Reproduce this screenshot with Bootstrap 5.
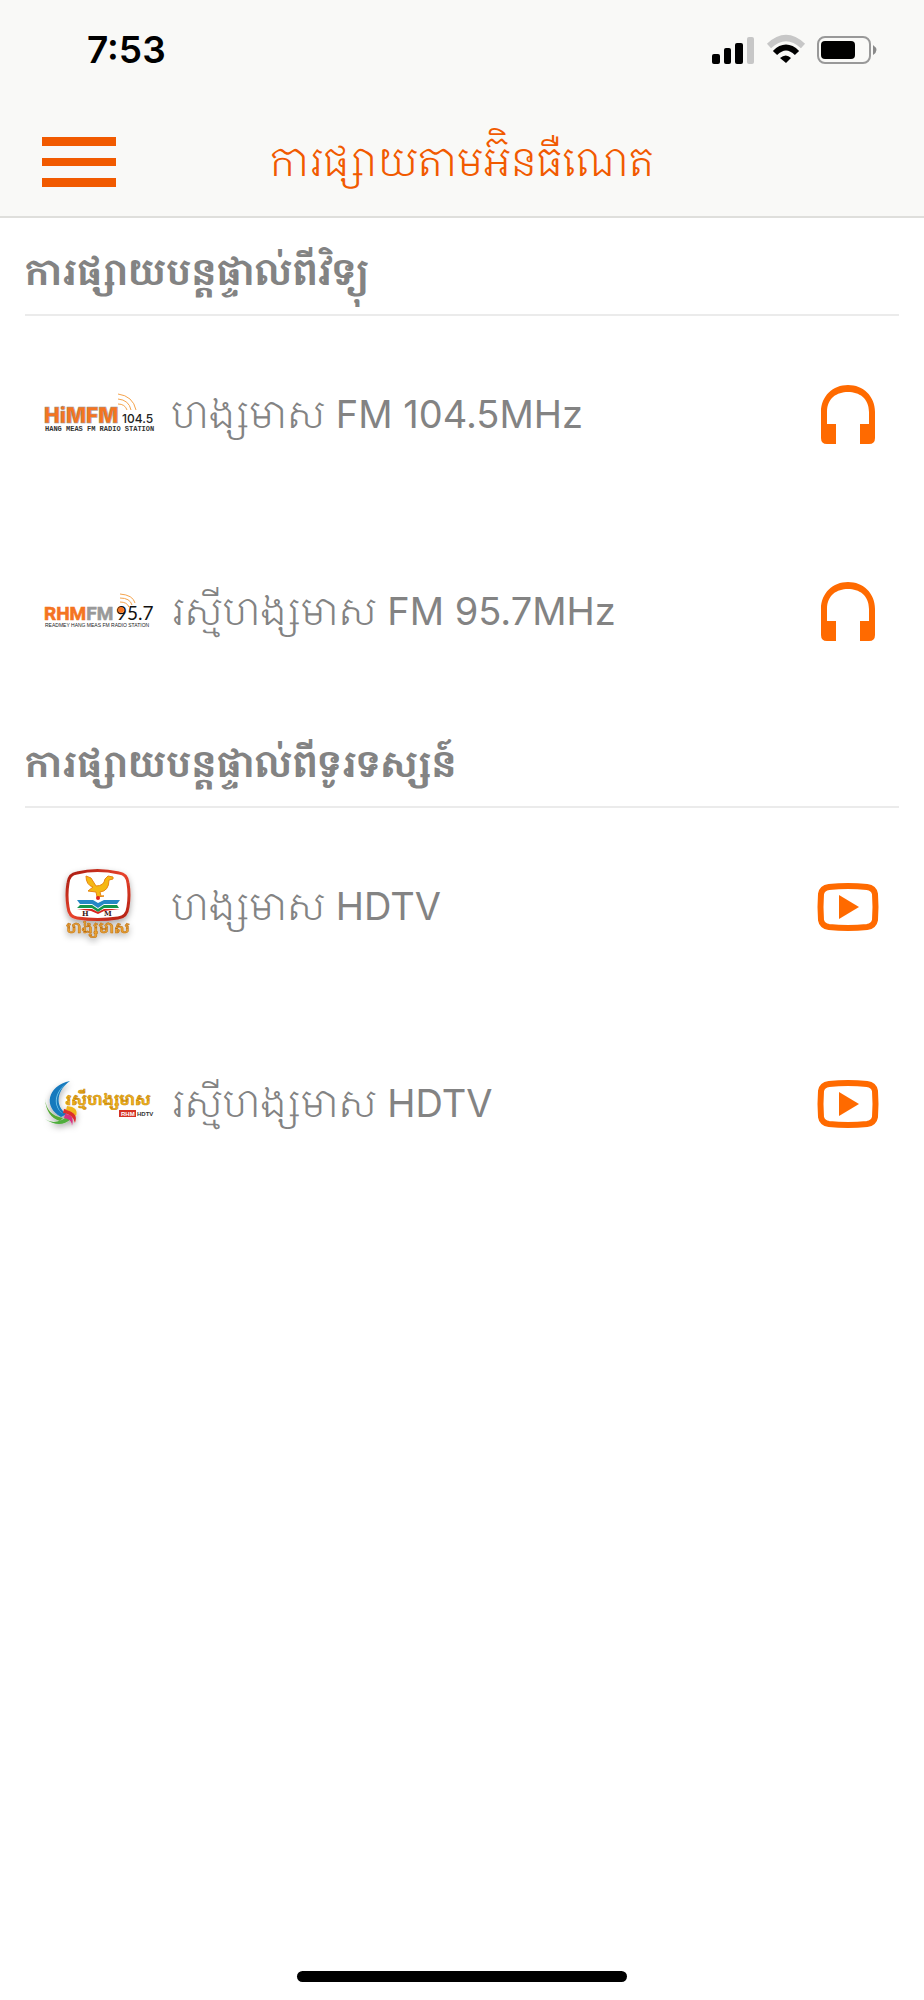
<!DOCTYPE html>
<html lang="km">
<head>
<meta charset="utf-8">
<meta name="viewport" content="width=device-width, initial-scale=1">
<title>ការផ្សាយតាមអ៊ិនធឺណេត</title>
<link href="https://cdn.jsdelivr.net/npm/bootstrap@5.3.0/dist/css/bootstrap.min.css" rel="stylesheet">
<style>
body { font-family: Inter, "Khmer Sangam MN", "Noto Serif Khmer", "Noto Sans Khmer", "Khmer OS", sans-serif; color: #838383; background: #fff; }
.top-area { background: #f9f9f7; border-bottom: 2px solid #dfdfdc; }
.status-bar { height: 100px; padding: 0 46px 0 87px; color: #000; }
.clock { font-size: 37px; line-height: 40px; font-weight: 600; }
.title-bar { display: grid; grid-template-columns: 1fr auto 1fr; height: 116px; padding: 8px 40px 0; }
.title-bar h1 { font-size: 40px; line-height: 60px; color: #f15a00; font-weight: 350; }
.menu-btn { justify-self: start; }
.group-title { height: 98px; font-size: 36px; line-height: 60px; font-weight: 700; border-bottom: 2px solid #ebebeb; padding-bottom: 12px; }
.page-main { padding: 0 25px; }
.station { height: 197px; padding: 0 20px 0 18px; }
.station-name { font-size: 38px; line-height: 60px; margin-left: 16px; padding-bottom: 2px; }
.station-name span { font-weight: 350; }
.home-bar { width: 330px; height: 11px; border-radius: 6px; background: #000; margin-bottom: 18px; }
svg { display: block; overflow: visible; }
</style>
</head>
<body class="d-flex flex-column min-vh-100">
<header class="top-area">
  <div class="status-bar d-flex align-items-center justify-content-between">
    <span class="clock">7:53</span>
    <svg width="166" height="28" viewBox="0 0 166 28" aria-hidden="true">
      <rect x="0" y="18" width="8" height="10" rx="2"/><rect x="12" y="12" width="7" height="16" rx="2"/><rect x="23" y="7" width="8" height="21" rx="2"/><rect x="35" y="1" width="7" height="27" rx="2" fill="#c7c7c7"/>
      <path d="M57 10Q74-6 91 10" fill="none" stroke="#c7c7c7" stroke-width="6"/>
      <path d="M63 17Q74 6 85 17" fill="none" stroke="#000" stroke-width="6"/>
      <path d="M68 22Q74 17 79 22L74 27Z"/>
      <rect x="106" y="1" width="52" height="26" rx="7" fill="none" stroke="#999" stroke-width="2"/><rect x="109" y="5" width="34" height="18" rx="4"/><path d="M161 9q7 5 0 10Z" fill="#8a8a8a"/>
    </svg>
  </div>
  <div class="title-bar align-items-center">
    <button class="btn p-0 border-0 menu-btn" type="button" aria-label="Menu">
      <svg width="78" height="52" fill="#f15a00"><rect x="2" y="1" width="74" height="9"/><rect x="2" y="22" width="74" height="8"/><rect x="2" y="42" width="74" height="9"/></svg>
    </button>
    <h1 class="m-0 text-nowrap">ការផ្សាយតាមអ&zwnj;៊ិនធឺណេត</h1>
  </div>
</header>

<main class="page-main">
  <section>
    <h2 class="group-title d-flex align-items-end m-0">ការផ្សាយបន្តផ្ទាល់ពីវិទ្យុ</h2>
    <div class="station d-flex align-items-center">
      <svg width="112" height="80" viewBox="0 0 112 80" aria-hidden="true">
        <text x="1" y="48" font-family="Inter" font-size="21" font-weight="900" fill="#f47421" stroke="#999" stroke-width=".5">HiMFM</text>
        <path d="M75 29q7 0 9 6M75 24q11 1 13 11M75 19q15 2 18 16" fill="none" stroke="#f5a34c"/>
        <text x="79" y="48" font-family="Inter" font-size="12" font-weight="500" fill="#222">104.5</text>
        <text x="2" y="56" font-family="Liberation Mono" font-size="7" font-weight="700" fill="#333">HANG MEAS FM RADIO STATION</text>
      </svg>
      <div class="station-name text-nowrap"><span>ហង្សមាស</span> FM 104.5MHz</div>
      <button class="btn p-0 border-0 ms-auto" type="button" aria-label="Listen">
        <svg width="62" height="62"><path d="M10 60H19V40H10V28C10 14 20 8 31 8S52 14 52 28V40H43V60H52Q58 60 58 54V28C58 12 46 1 31 1S4 12 4 28V54Q4 60 10 60Z" fill="#ff6a00"/></svg>
      </button>
    </div>
    <div class="station d-flex align-items-center">
      <svg width="112" height="80" viewBox="0 0 112 80" aria-hidden="true">
        <text x="1" y="48" font-family="Roboto" font-size="19" font-weight="700" fill="#f47421" stroke="#f47421" stroke-width=".6">RHM<tspan fill="#999" stroke="#999">FM</tspan></text>
        <text x="73" y="48" font-family="Lato" font-size="19" fill="#111">95.7</text>
        <circle cx="78" cy="38" r="3" fill="#f47421"/><path d="M77 30q7 0 9 5M77 26q10 0 12 7M77 22q13 1 15 9" fill="none" stroke="#f5a34c"/>
        <text x="2" y="55" font-family="Liberation Sans" font-size="5" fill="#222">READMEY HANG MEAS FM RADIO STATION</text>
      </svg>
      <div class="station-name text-nowrap"><span>រស្មីហង្សមាស</span> FM 95.7MHz</div>
      <button class="btn p-0 border-0 ms-auto" type="button" aria-label="Listen">
        <svg width="62" height="62"><path d="M10 60H19V40H10V28C10 14 20 8 31 8S52 14 52 28V40H43V60H52Q58 60 58 54V28C58 12 46 1 31 1S4 12 4 28V54Q4 60 10 60Z" fill="#ff6a00"/></svg>
      </button>
    </div>
  </section>

  <section>
    <h2 class="group-title d-flex align-items-end m-0">ការផ្សាយបន្តផ្ទាល់ពីទូរទស្សន៍</h2>
    <div class="station d-flex align-items-center">
      <svg width="112" height="80" viewBox="0 0 112 80" aria-hidden="true">
        <defs><filter id="soft" x="-30%" y="-30%" width="160%" height="170%"><feDropShadow dx="0" dy="3" stdDeviation="3" flood-opacity=".35"/></filter>
        <linearGradient id="red" x2="1" y2="1"><stop stop-color="#a51b12"/><stop offset=".5" stop-color="#e8432c"/><stop offset="1" stop-color="#b11f12"/></linearGradient></defs>
        <path d="M34 6Q54 1 76 6Q84 7 85 16Q87 28 85 40Q84 50 75 51Q55 54 34 51Q26 50 25 40Q23 28 25 16Q26 7 34 6Z" fill="#fff" stroke="url(#red)" stroke-width="3" filter="url(#soft)"/>
        <path d="M43 9L48 11L53 19Q61 19 62 12L65 9L70 10V12L66 13Q66 24 57 25L58 29H61L54 30L53 25L45 24L50 20Q43 18 43 9Z" fill="#f5b813" stroke="#e88612"/>
        <circle cx="55" cy="31" r="2" fill="#e2231a"/>
        <path d="M34 33H50L55 36L61 33H77L74 37H61L55 41L49 37H37Z" fill="#2588c5"/>
        <path d="M37 38H49L55 42L61 38H74L76 41H61L55 45L49 41H34Z" fill="#15964a"/>
        <path d="M34 42H49L55 45L61 42H77L61 44L55 47L48 44Z" fill="#d7261e"/>
        <text x="39" y="49" font-family="DejaVu Serif" font-size="7" font-weight="700" fill="#3a1512">H</text><text x="61" y="49" font-family="DejaVu Serif" font-size="7" font-weight="700" fill="#3a1512">M</text>
        <text x="55" y="66" text-anchor="middle" font-size="15" font-weight="700" fill="#e9a02f" stroke="#b76c16" stroke-width=".5" filter="url(#soft)">ហង្សមាស</text>
      </svg>
      <div class="station-name text-nowrap"><span>ហង្សមាស</span> HDTV</div>
      <button class="btn p-0 border-0 ms-auto" type="button" aria-label="Watch">
        <svg width="62" height="62"><path d="M12 11Q31 9 50 11Q57 12 58 18Q59 31 58 44Q57 50 50 51Q31 53 12 51Q5 50 4 44Q3 31 4 18Q5 12 12 11Z" fill="none" stroke="#ff6a00" stroke-width="6"/><path d="M22 19V43L42 31Z" fill="#ff6a00"/></svg>
      </button>
    </div>
    <div class="station d-flex align-items-center">
      <svg width="112" height="80" viewBox="0 0 112 80" aria-hidden="true">
        <g filter="url(#soft)">
        <path d="M27 17C4 22 0 43 18 53L24 50C11 42 14 26 27 17Z" fill="#1679bd"/><path d="M24 19C11 28 9 42 20 50C9 40 14 27 24 19Z" fill="#72c7eb"/>
        <path d="M2 34Q3 51 20 54L17 57Q3 53 2 34Z" fill="#56aa35"/><path d="M2 55Q12 62 25 52L28 55Q17 65 2 55Z" fill="#4fae3c"/>
        <path d="M22 50Q32 50 29 62Q29 55 21 54Z" fill="#d53282"/><path d="M21 45Q36 47 32 59Q30 50 20 49Z" fill="#dc2d2b"/><path d="M24 42Q36 43 33 52Q29 47 23 46Z" fill="#efb51d"/></g>
        <text x="22" y="41" font-size="15" font-weight="700" fill="#f4b51b" stroke="#c98a0a" stroke-width=".6">រស្មីហង្សមាស</text>
        <rect x="76" y="46" width="17" height="7" fill="#d53224"/><text x="78" y="52" font-family="Liberation Sans" font-size="6" font-weight="700" fill="#fff">RHM</text><text x="94" y="52" font-family="Liberation Sans" font-size="6" font-weight="700" fill="#333">HDTV</text>
      </svg>
      <div class="station-name text-nowrap"><span>រស្មីហង្សមាស</span> HDTV</div>
      <button class="btn p-0 border-0 ms-auto" type="button" aria-label="Watch">
        <svg width="62" height="62"><path d="M12 11Q31 9 50 11Q57 12 58 18Q59 31 58 44Q57 50 50 51Q31 53 12 51Q5 50 4 44Q3 31 4 18Q5 12 12 11Z" fill="none" stroke="#ff6a00" stroke-width="6"/><path d="M22 19V43L42 31Z" fill="#ff6a00"/></svg>
      </button>
    </div>
  </section>
</main>
<div class="home-bar mt-auto mx-auto"></div>
<script src="https://cdn.jsdelivr.net/npm/bootstrap@5.3.0/dist/js/bootstrap.bundle.min.js"></script>
</body>
</html>
